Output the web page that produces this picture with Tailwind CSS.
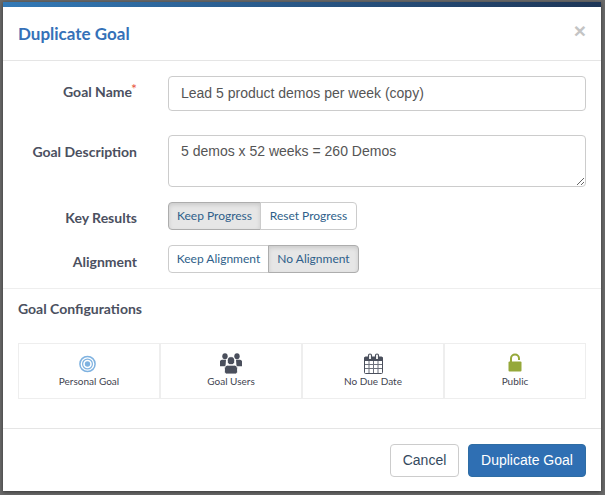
<!DOCTYPE html>
<html lang="en">
<head>
  <meta charset="UTF-8">
  <title>Duplicate Goal</title>
  <script src="https://cdn.jsdelivr.net/npm/@tailwindcss/browser@4"></script>
</head>
<body class="bg-[#6a6a6a] h-[495px] w-[605px] overflow-hidden font-['Lato',sans-serif]">
  <div class="ml-[3px] mt-[2px] w-[598px] h-[489px] bg-white shadow-[0_1px_4px_rgba(0,0,0,0.5)]">
    <div class="h-[5px] bg-gradient-to-r from-[#337ab7] to-[#1d3557]"></div>

    <!-- Header -->
    <div class="h-[54px] border-b border-[#e5e5e5] flex items-center justify-between pl-[15px] pr-[15px]">
      <h4 class="text-[17px] font-bold text-[#3571b8] leading-none">Duplicate Goal</h4>
      <span class="text-[21px] font-bold text-[#c4c4c4] leading-none font-['Liberation_Sans',sans-serif] -mt-[7px]">×</span>
    </div>

    <!-- Form -->
    <div class="pt-[15px] pr-[15px]">
      <div class="flex items-center h-[35px]">
        <label class="w-[134px] text-right text-sm font-bold text-[#4b5060] leading-none pb-[3px]">Goal Name<sup class="text-[#e8543f] text-sm font-normal top-[-3px] -ml-[1px]">*</sup></label>
        <input class="ml-[31px] w-[418px] h-[35px] px-3 pb-[2px] border border-[#ccc] rounded text-sm text-[#555] font-['Liberation_Sans',sans-serif]" value="Lead 5 product demos per week (copy)">
      </div>
      <div class="flex items-start mt-[24px]">
        <label class="w-[134px] text-right text-sm font-bold text-[#4b5060] leading-none pt-[10px]">Goal Description</label>
        <textarea class="ml-[31px] w-[418px] h-[52px] px-3 py-[6px] border border-[#ccc] rounded text-sm leading-[18px] text-[#555] font-['Liberation_Sans',sans-serif]">5 demos x 52 weeks = 260 Demos</textarea>
      </div>
      <div class="flex items-center mt-[15px] h-[28px]">
        <label class="w-[134px] text-right text-sm font-bold text-[#4b5060] leading-none pt-[4px]">Key Results</label>
        <div class="ml-[31px] flex text-xs text-[#2f5f8a] h-[28px]">
          <span class="w-[93px] flex items-center justify-center bg-[#e6e6e6] border border-[#adadad] rounded-l shadow-[inset_0_2px_4px_rgba(0,0,0,0.12)]">Keep Progress</span>
          <span class="w-[97px] -ml-px flex items-center justify-center bg-white border border-[#ccc] rounded-r">Reset Progress</span>
        </div>
      </div>
      <div class="flex items-center mt-[15px] h-[28px]">
        <label class="w-[134px] text-right text-sm font-bold text-[#4b5060] leading-none pt-[6px]">Alignment</label>
        <div class="ml-[31px] flex text-xs text-[#2f5f8a] h-[28px]">
          <span class="w-[101px] flex items-center justify-center bg-white border border-[#ccc] rounded-l">Keep Alignment</span>
          <span class="w-[91px] -ml-px flex items-center justify-center bg-[#e6e6e6] border border-[#adadad] rounded-r shadow-[inset_0_2px_4px_rgba(0,0,0,0.12)]">No Alignment</span>
        </div>
      </div>
    </div>

    <div class="mt-[15px] border-t border-[#eee]"></div>

    <!-- Goal configurations -->
    <div class="pl-[15px] pr-[15px]">
      <h5 class="mt-[13px] text-sm font-bold text-[#4b5060] leading-[14px]">Goal Configurations</h5>
      <div class="mt-[27px] w-[568px] h-[56px] grid grid-cols-4 text-[10px] text-[#3f4450]">
        <div class="flex flex-col items-center pt-[11px] border border-[#eee]">
          <svg class="-ml-[4px]" width="17" height="18" viewBox="0 0 17 18">
            <circle cx="8.5" cy="9" r="7.6" fill="none" stroke="#7fb2e0" stroke-width="1.5"/>
            <circle cx="8.5" cy="9" r="4.9" fill="none" stroke="#7fb2e0" stroke-width="1.2"/>
            <circle cx="8.5" cy="9" r="2.7" fill="#7fb2e0"/>
          </svg>
          <span class="mt-[2px] leading-[12px]">Personal Goal</span>
        </div>
        <div class="flex flex-col items-center pt-[9px] border border-[#eee]">
          <svg width="22" height="21" viewBox="0 0 22 19" preserveAspectRatio="none" fill="#4a4f5c">
            <circle cx="5" cy="3" r="2.7"/>
            <circle cx="17" cy="3" r="2.7"/>
            <path d="M0 7.5a2 2 0 0 1 2-1.5h4l-.5 6H0z"/>
            <path d="M22 7.5a2 2 0 0 0-2-1.5h-4l.5 6H22z"/>
            <circle cx="11" cy="7" r="3.7" stroke="#fff" stroke-width="0.8"/>
            <path d="M4.5 14a3 3 0 0 1 3-3h7a3 3 0 0 1 3 3v3a2 2 0 0 1-2 2h-9a2 2 0 0 1-2-2z" stroke="#fff" stroke-width="0.8"/>
          </svg>
          <span class="mt-[1px] leading-[12px]">Goal Users</span>
        </div>
        <div class="flex flex-col items-center pt-[9px] border border-[#eee]">
          <svg width="19" height="21" viewBox="0 0 19 21" fill="none">
            <rect x="0.5" y="4" width="18" height="16.5" rx="1" fill="#fff" stroke="#4a4f5c"/>
            <rect x="0.5" y="4" width="18" height="4" fill="#4a4f5c"/>
            <path d="M1 11.500h17M1 15.500h17M5 8v12M9.500 8v12M14 8v12" stroke="#6d717c"/>
            <path d="M4.500 6V2.500a1.500 1.500 0 0 1 3 0V6M11.500 6V2.500a1.500 1.500 0 0 1 3 0V6" stroke="#4a4f5c" stroke-width="1.200" fill="#fff"/>
          </svg>
          <span class="mt-[1px] leading-[12px]">No Due Date</span>
        </div>
        <div class="flex flex-col items-center pt-[9px] border border-[#eee]">
          <svg width="14" height="19" viewBox="0 0 14 19" fill="none">
            <path d="M3 9V5.500a4 4 0 0 1 8 0V7" stroke="#95a83a" stroke-width="2"/>
            <rect x="0.500" y="8.500" width="13" height="10" rx="1" fill="#95a83a"/>
          </svg>
          <span class="mt-[3px] leading-[12px]">Public</span>
        </div>
      </div>
    </div>

    <div class="mt-[29px] border-t border-[#e5e5e5]"></div>

    <!-- Footer -->
    <div class="flex justify-end gap-[9px] pt-[15px] pr-[15px] text-sm font-['Liberation_Sans',sans-serif]">
      <button class="w-[69px] h-[33px] pb-[2px] bg-white border border-[#ccc] rounded text-[#34495e]">Cancel</button>
      <button class="w-[118px] h-[33px] pb-[2px] bg-[#2f6fb3] border border-[#2e6da4] rounded text-white">Duplicate Goal</button>
    </div>
  </div>
</body>
</html>
